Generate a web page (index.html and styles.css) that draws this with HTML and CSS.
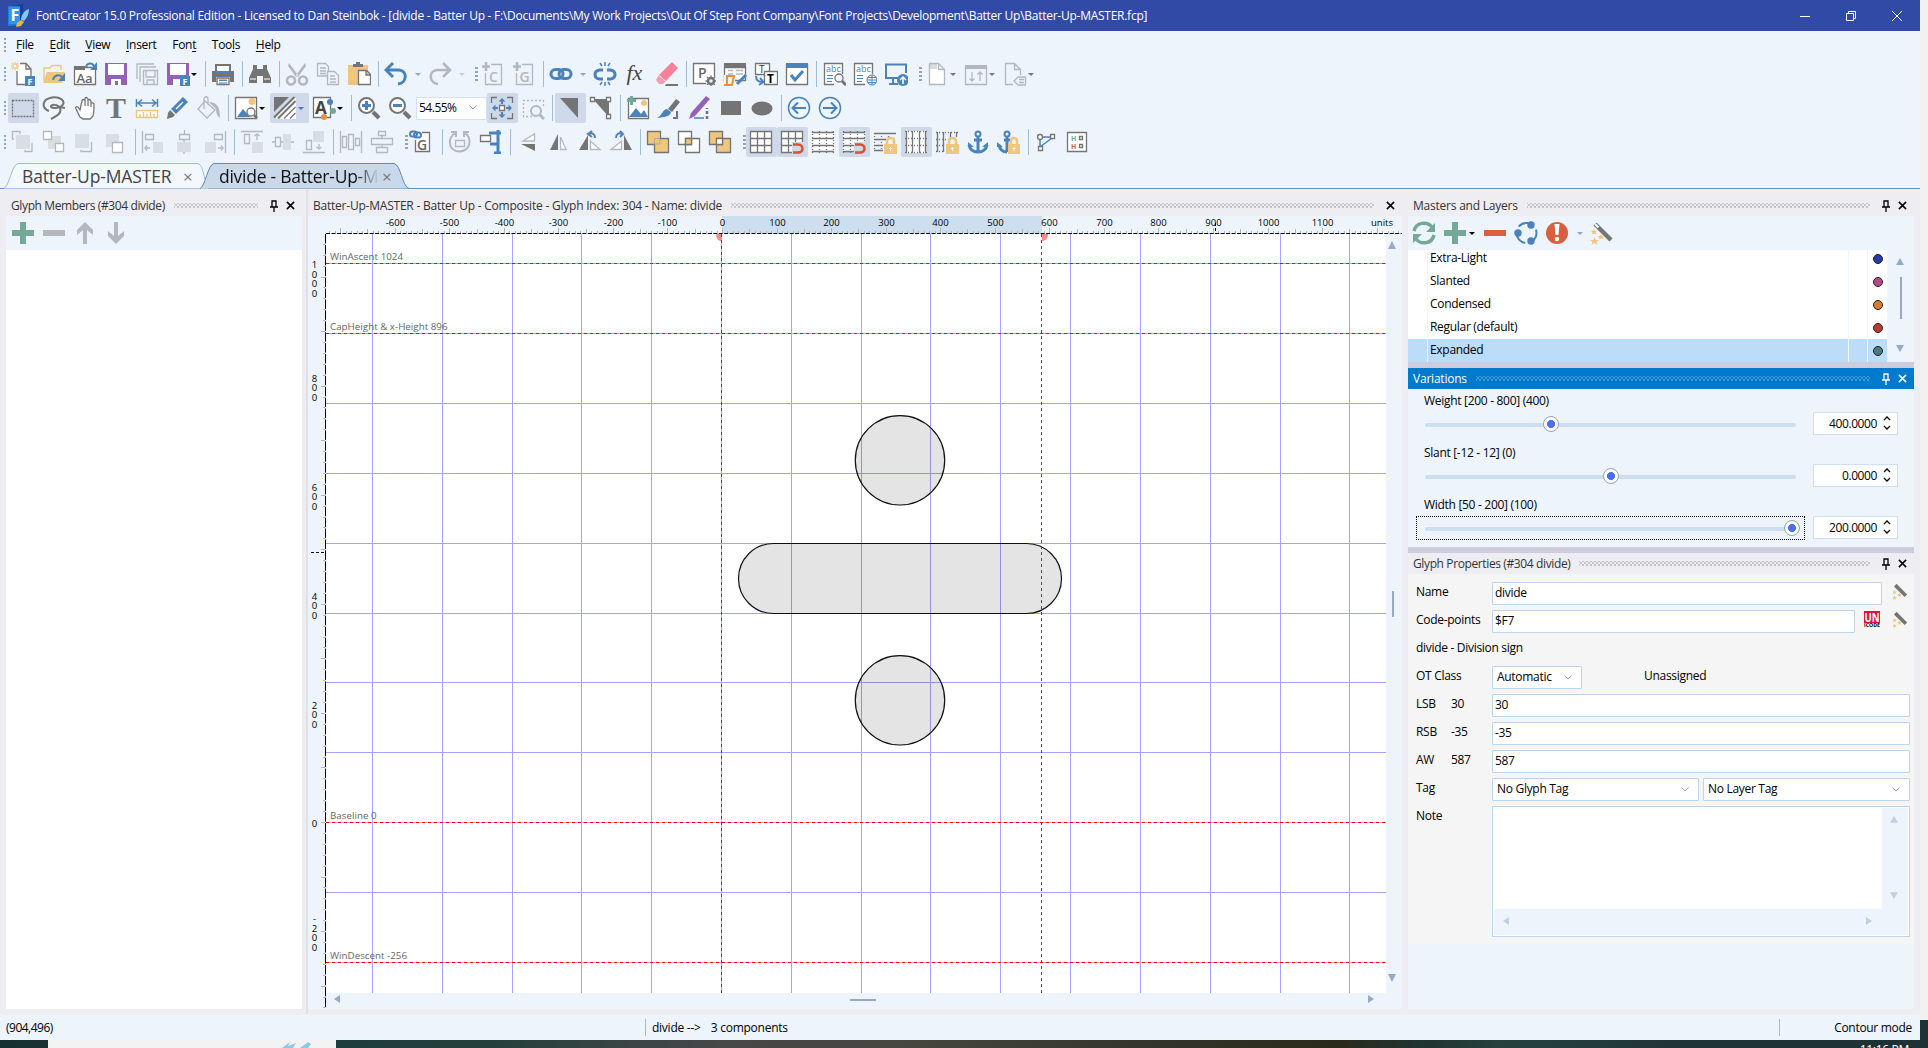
FILE: index.html
```html
<!DOCTYPE html>
<html lang="en">
<head>
    <meta charset="UTF-8">
    <title>FontCreator 15.0 Professional Edition</title>
    <link rel="stylesheet" href="styles.css">
</head>
<body>
<div class="window">
    <div class="titlebar">
        <svg class="app-icon" viewBox="0 0 24 24"><path d="M1 2l13-1v20L1 22z" fill="#1c7fe0"/><path d="M3 1.500l13-1v19l-3 2V2z" fill="#0d3f95"/><rect x="2" y="3" width="11" height="17" fill="#2f95ee"/><text x="3.500" y="17" font-size="16" font-weight="bold" fill="#fff">F</text><path d="M22 5c-5 2-8 6-8 11l3 1c3-3 5-7 5-12z" fill="#7ec8f5"/><path d="M10 19l4-3 3 2-3 4-5 1z" fill="#edb83d"/></svg>
        <span class="title">FontCreator 15.0 Professional Edition - Licensed to Dan Steinbok - [divide - Batter Up - F:\Documents\My Work Projects\Out Of Step Font Company\Font Projects\Development\Batter Up\Batter-Up-MASTER.fcp]</span>
        <svg class="win-btn" viewBox="0 0 12 12"><path d="M1 6.500h10"/></svg>
        <svg class="win-btn" viewBox="0 0 12 12"><path d="M1.500 3.500h7v7h-7zM3.500 3V1.500h7v7H9"/></svg>
        <svg class="win-btn last" viewBox="0 0 12 12"><path d="M1 1l10 10M11 1L1 11"/></svg>
    </div>

    <div class="menubar">
        <i class="grip first"></i>
        <span><u>F</u>ile</span><span><u>E</u>dit</span><span><u>V</u>iew</span><span><u>I</u>nsert</span><span>Fon<u>t</u></span><span>Too<u>l</u>s</span><span><u>H</u>elp</span>
    </div>

    <!-- file toolbar -->
    <div class="toolbar">
        <i class="grip first"></i>
        <b class="btn"><svg viewBox="0 0 24 24"><path class="s" d="M6 9v13.500h14V7l-5-5.500H9M15 1.500V7h5"/><path class="sy" d="M4 0v8M0 4h8M1 1l6 6M7 1L1 7"/><circle cx="4" cy="4" r="1.500" fill="#fff"/><rect class="fb" x="14" y="14" width="10" height="10"/><text class="tw" x="16.500" y="22.500" font-size="9">F</text></svg></b>
        <b class="btn"><svg viewBox="0 0 24 24"><path class="sy" d="M2 20V6h6l2-2.500h9V8"/><path class="fy" d="M1 21l4-11h18l-3 11z"/><path class="sb" d="M11 18c1-5 6-6 9-3"/><path class="fb" d="M23 11v8h-7z"/></svg></b>
        <b class="btn"><svg viewBox="0 0 24 24"><path class="s" d="M1.500 5.500h21v17h-21z"/><path class="fg" d="M1 4h11v4H1z"/><text class="tg" x="3.500" y="20.500" font-size="13">Aa</text><path class="sb" d="M13 5c1-4 6-5 8-1"/><path class="fb" d="M24 0v8h-7z"/></svg></b>
        <b class="btn"><svg viewBox="0 0 24 24"><path class="fp" d="M1 1h22v22H1z"/><path fill="#fff" d="M4 2h16v11H4zM7 17h10v6h-3v-4h-3v4H7z"/></svg></b>
        <b class="btn"><svg viewBox="0 0 24 24"><path class="sl" d="M2 17V2h17M5 20V5h16"/><path class="sl" d="M8.500 8.500h14v14h-14zM11 9v6h9V9M12 22v-4h7v4"/></svg></b>
        <b class="btn dd"><svg viewBox="0 0 24 24"><path class="fp" d="M1 1h22v22H1z"/><path fill="#fff" d="M4 2h16v11H4zM7 17h8v6H7z"/><rect class="fb" x="14" y="14" width="10" height="10"/><text class="tw" x="16.500" y="22.500" font-size="9">F</text></svg><i class="arr"></i></b>
        <i class="sep"></i>
        <b class="btn"><svg viewBox="0 0 24 24"><path class="fg" d="M1 9h3V2h16v7h3v11h-4v-5H5v5H1z"/><path fill="#fff" d="M6 4h12v5H6zM6 16h12v7H6z"/><path class="fb" d="M4 9h16v2H4zM8 17.500h8v1.500H8zM8 20.500h8v1H8z"/><path class="s none" d="M6 16h12v6.500H6z"/></svg></b>
        <i class="sep"></i>
        <b class="btn"><svg viewBox="0 0 24 24"><path class="fg" d="M5 3h4v4h6V3h4v4l4 9v5h-8v-7H9v7H1v-5l4-9z"/><path stroke="#fff" d="M2 17h6M16 17h6"/></svg></b>
        <i class="sep"></i>
        <b class="btn"><svg viewBox="0 0 24 24"><path class="fl" d="M4 1l9 12-2 2L3 4zM20 1l-9 12 2 2 8-11z"/><circle class="sl th" cx="6" cy="18.500" r="4"/><circle class="sl th" cx="18" cy="18.500" r="4"/></svg></b>
        <b class="btn"><svg viewBox="0 0 24 24"><path class="sl" d="M11 14H1.500V1.500h8l3 3V9M4 6h6M4 9h6M4 11.500h6"/><path class="sl" d="M11.500 9.500h7l4 4v9h-11zM14 14h5M14 17h6M14 20h6"/></svg></b>
        <b class="btn"><svg viewBox="0 0 24 24"><path class="fy" d="M1 3h20v20H1z"/><path class="fg" d="M6 5V2h3V0h4v2h3v3z"/><path class="s" d="M11.500 8.500h8l4 4v10h-12zM19 9v4h4"/></svg></b>
        <i class="sep"></i>
        <b class="btn dd wide"><svg viewBox="0 0 24 24"><path class="sb th" d="M3 8h12c9 1 8 13-1 14"/><path class="sb th" d="M9 1L2 8l7 7"/></svg><i class="arr pale"></i></b>
        <b class="btn dd wide"><svg viewBox="0 0 24 24"><path class="sl th" d="M21 8H9C0 9 1 21 10 22M15 1l7 7-7 7"/></svg><i class="arr paler"></i></b>
        <i class="grip"></i>
        <b class="btn"><svg viewBox="0 0 24 24"><path class="sl" d="M10 2.500h10.500v20h-16V11"/><path class="sl th" d="M5 0v9M1 4.500h8"/><text class="tl" x="8" y="19.500" font-size="14">C</text></svg></b>
        <b class="btn"><svg viewBox="0 0 24 24"><path class="sl" d="M10 2.500h10.500v20h-16V11"/><path class="sl th" d="M5 0v9M1 4.500h8"/><text class="tl" x="7.500" y="19.500" font-size="14">G</text></svg></b>
        <i class="sep"></i>
        <b class="btn dd wide"><svg viewBox="0 0 24 24"><rect class="sb th" x="2" y="7.500" width="12" height="9" rx="4.500"/><rect class="sb th" x="10" y="7.500" width="12" height="9" rx="4.500"/></svg><i class="arr pale"></i></b>
        <b class="btn"><svg viewBox="0 0 24 24"><path class="sb th" d="M10 8H6.500c-6 1-6 8 0 9H10M14 8h3.500c6 1 6 8 0 9H14"/><path class="sb mid" d="M12 0v4M7 1l2 3M17 1l-2 3M12 20v4M7 23l2-3M17 23l-2-3"/></svg></b>
        <b class="btn"><svg viewBox="0 0 24 24"><text x="2.500" y="18" font-size="22" font-style="italic" fill="#444" class="serif">fx</text></svg></b>
        <b class="btn"><svg viewBox="0 0 24 24"><path d="M17 0l6 6L11 19l-7-6z" fill="#f7819a"/><path d="M3.500 13.500l7 6L8 22H4l-3-4z" fill="#f59db0"/><path class="fg" d="M11 22h12v2H10z"/></svg></b>
        <i class="sep"></i>
        <b class="btn"><svg viewBox="0 0 24 24"><path class="s" d="M1.500 1.500h21v20h-21z"/><text class="tg" x="6" y="16" font-size="14">P</text><circle cx="19" cy="19" r="5.500" fill="#edf4fc"/><circle class="s none w25" cx="19" cy="19" r="3"/><path class="s none" d="M19 13.500v11M13.500 19h11M15 15l8 8M23 15l-8 8" stroke-dasharray="2 7"/></svg></b>
        <b class="btn"><svg viewBox="0 0 24 24"><path class="s" d="M1.500 5.500h21v13h-21z"/><path class="fg" d="M1 1h22v4H1z"/><path class="sl" d="M5 8.500h5M13 8.500h7M5 12h5M13 12h7"/><path d="M1 13h11v10H1z" fill="#edf4fc"/><path d="M3 14h8l-2 9H1M4 14v8" fill="none" stroke="#e8903c" stroke-width="2"/><path class="sb th" d="M14 22l9-9"/></svg></b>
        <b class="btn"><svg viewBox="0 0 24 24"><path class="s" d="M1.500 1.500h14v11h-14z"/><path class="s" d="M10.500 9.500h13v13h-13z"/><text x="5" y="11" font-size="10" fill="#333">T</text><text x="13" y="20.500" font-size="12" font-weight="bold" fill="#000">T</text><path class="sb" d="M2 14c0 4 2 6 6 6M6 16l3.500 4L5 23"/></svg></b>
        <b class="btn"><svg viewBox="0 0 24 24"><path class="s" d="M1.500 2.500h21v20h-21z"/><path class="fb" d="M1 1h22v5H1z"/><path class="sb th" d="M6 13l4 5 8-9"/></svg></b>
        <i class="sep"></i>
        <b class="btn"><svg viewBox="0 0 24 24"><path class="s" d="M20.500 12V1.500h-18v21H12"/><text x="4" y="10" font-size="9" fill="#4a82bc">abc</text><path class="sb thin" d="M5 13.500h6M5 16.500h6M5 19.500h5"/><circle class="s none" cx="17" cy="16" r="4"/><path class="s none w3" d="M20 19l4 4"/></svg></b>
        <b class="btn"><svg viewBox="0 0 24 24"><path class="s" d="M19.500 12V1.500h-18v21H12"/><text x="3" y="10" font-size="9" fill="#4a82bc">abc</text><path class="sb thin" d="M4 13.500h6M4 16.500h6M4 19.500h5"/><circle cx="19" cy="18" r="5" fill="#fff" stroke="#4a82bc"/><path class="sb thin" d="M14 18h10M19 13v10M15 15.500h8M15 20.500h8"/></svg></b>
        <b class="btn"><svg viewBox="0 0 24 24"><path class="sb" d="M14 16H2V2.500h20V11M5 22h9M9 16v5"/><circle class="fb" cx="19" cy="18" r="6"/><path d="M19 22v-7M16 18l3-3 3 3" fill="none" stroke="#fff" stroke-width="1.500"/></svg></b>
        <i class="grip"></i>
        <b class="btn dd"><svg viewBox="0 0 24 24"><path class="sl wf" d="M4.500 1.500h9l6 6v15h-15zM13.500 1.500v6h6"/><path class="fl" opacity=".5" d="M5 2h7v5H5z"/></svg><i class="arr grey"></i></b>
        <b class="btn dd"><svg viewBox="0 0 24 24"><path class="sl" d="M1.500 5.500h21v17h-21z"/><path class="fl" d="M1 3h22v4H1z"/><path class="sl" d="M8 10v9M5.500 16.500L8 19l2.500-2.500M16 19v-9M13.500 12.500L16 10l2.500 2.500"/></svg><i class="arr grey"></i></b>
        <b class="btn dd"><svg viewBox="0 0 24 24"><path class="sl" d="M10 22.500H2.500v-21h9l6 6V13M11.500 1.500v6h6M11 19l4-4h7.500v8H15zM16 17.500h5M16 20.500h5"/></svg><i class="arr grey"></i></b>
    </div>

    <!-- drawing toolbar -->
    <div class="toolbar">
        <i class="grip first"></i>
        <b class="btn on"><svg viewBox="0 0 24 24"><path class="s none" stroke-dasharray="2 1" d="M1.500 4.500h21v16h-21z"/></svg></b>
        <b class="btn"><svg viewBox="0 0 24 24"><path class="s none w2" d="M7 15C-1 12 0 3 10 1.500c8-1 13 3 11 7C19 12 11 13 9 11c-1-3 7-3 9 1 2 5-3 8-9 11M17 11l6 1"/></svg></b>
        <b class="btn"><svg viewBox="0 0 24 24"><path class="s" d="M7 14L5 11c-2-1-3 0-2 2l4 8 3 2h7l3-3c1-4 1-8 1-12-1-2-3-1-3 0V5c-1-2-3-2-3 0V3c-1-2-3-2-3 0v2c-1-2-3-2-3 0zM12 4v6M15 5v5M18 8v3"/></svg></b>
        <b class="btn"><svg viewBox="0 0 24 24"><text class="serif" x="12" y="22" font-size="30" font-weight="bold" text-anchor="middle" fill="#747474">T</text></svg></b>
        <b class="btn"><svg viewBox="0 0 24 24"><path class="sb mid" d="M1.500 3v8M22.500 3v8M3 7h18M7 3.500L3 7l4 3.500M17 3.500L21 7l-4 3.500"/><path class="sy wf" d="M1.500 14.500h21v7h-21zM5 18v3M8.500 16v5M12 18v3M15.500 16v5M19 18v3"/></svg></b>
        <b class="btn"><svg viewBox="0 0 24 24"><path class="fb" d="M17 1l5 5L10 18l-5-5z"/><path class="fg" d="M4 14l5 5-2 2-6 2 1-6z"/><path stroke="#fff" stroke-width="1.500" d="M10 13l7-7"/></svg></b>
        <b class="btn"><svg viewBox="0 0 24 24"><path class="sl" d="M8 5l10 9-8 8-9-9zM7 13V3c0-3 4-3 4 0v6"/><path class="fl" d="M12 6c8 0 11 5 11 16-3-2-4-5-4-9z"/></svg></b>
        <i class="sep"></i>
        <b class="btn dd"><svg viewBox="0 0 24 24"><path class="s" d="M1.500 1.500h21v21h-21z"/><circle class="fy" cx="18" cy="5.500" r="3.500"/><path class="fb" d="M3 21l6-8 7 8z"/><circle class="s" cx="17" cy="16" r="4"/><path class="s w25" d="M20 19l3 3"/></svg><i class="arr"></i></b>
        <b class="btn dd on"><svg viewBox="0 0 24 24"><path fill="#fff" d="M20 2h3v21H3v-3z"/><path class="fg" d="M1 1h15L1 16z"/><path class="s none w2" d="M1 21.500L21.500 1M5 22.500L22.500 5"/><path class="s none" d="M11 22.500L22.500 11M17 22.500l5.500-5.500"/></svg><i class="arr blue"></i></b>
        <b class="btn dd"><svg viewBox="0 0 24 24"><path class="s" d="M1.500 1.500h17v20h-17z"/><text x="3" y="17.500" font-size="17" font-weight="bold" fill="#444">A</text><circle class="fb" cx="18" cy="6" r="3"/><circle class="ff" cx="21" cy="15" r="3"/><circle cx="12" cy="21" r="3" fill="#e8903c"/></svg><i class="arr"></i></b>
        <i class="sep"></i>
        <b class="btn"><svg viewBox="0 0 24 24"><path class="s w4" d="M16 16l6 6"/><circle class="s w2" cx="9.500" cy="9.500" r="7.500"/><path class="sb th" d="M5 9.500h9M9.500 5v9"/></svg></b>
        <b class="btn"><svg viewBox="0 0 24 24"><path class="s w4" d="M16 16l6 6"/><circle class="s w2" cx="9.500" cy="9.500" r="7.500"/><path class="sb th" d="M5 9.500h9"/></svg></b>
        <div class="combo">54.55%<svg viewBox="0 0 8 5"><path d="M.5.5L4 4 7.500.5"/></svg></div>
        <b class="btn on"><svg viewBox="0 0 24 24"><path class="s none" d="M7 1.500H1.500V7M17 1.500h5.500V7M7 22.500H1.500V17M17 22.500h5.500V17"/><path class="s" d="M9.500 9.500h5v5h-5z"/><path class="fb" d="M12 2l3.500 3.500H13V8h-2V5.500H8.500zM12 22l3.500-3.500H13V16h-2v2.500H8.500zM2 12l3.500-3.500V11H8v2H5.500v2.500zM22 12l-3.500-3.500V11H16v2h2.500v2.500z"/></svg></b>
        <b class="btn"><svg viewBox="0 0 24 24"><path class="sl" stroke-dasharray="2 2" d="M11 20.500H2.500v-16h20V12"/><circle class="sl w2" cx="15" cy="15" r="5"/><path class="sl w3" d="M19 19l4 4"/></svg></b>
        <i class="sep"></i>
        <b class="btn on"><svg viewBox="0 0 24 24"><path class="fg" d="M2 2h18v20z"/></svg></b>
        <b class="btn"><svg viewBox="0 0 24 24"><path class="fg" d="M4 3h16v18z"/><path class="s" d="M1.500 1.500h4v4h-4zM17.500 1.500h4v4h-4zM17.500 18.500h4v4h-4z"/></svg></b>
        <i class="sep"></i>
        <b class="btn"><svg viewBox="0 0 24 24"><path class="s" d="M2.500 2.500h20v20h-20z"/><circle class="fy" cx="18" cy="7" r="3"/><path class="fb" d="M3 21l7-9 5 6 3-4 4 7z"/><path class="ff" d="M4 0h3v3h3v3H7v3H4V6H1V3h3z"/></svg></b>
        <b class="btn"><svg viewBox="0 0 24 24"><path class="fg" d="M19 3l4 3-8 10-4-3z"/><path class="fb" d="M10 13l4 3c-1 5-7 5-14 6 5-2 5-8 10-9z"/><path class="s none w2" d="M16 22h4v-7"/></svg></b>
        <b class="btn"><svg viewBox="0 0 24 24"><path class="fp" d="M18 0l4 3L7 20l-6 3 2-6z"/><path class="sb mid" d="M6 22h10"/><path class="s w25" d="M19 23V12" stroke-dasharray="3 2"/></svg></b>
        <b class="btn"><svg viewBox="0 0 24 24"><path class="fg" d="M2 5h20v14H2z"/></svg></b>
        <b class="btn"><svg viewBox="0 0 24 24"><ellipse class="fg" cx="12" cy="12.500" rx="10.500" ry="7"/></svg></b>
        <i class="sep"></i>
        <b class="btn"><svg viewBox="0 0 24 24"><circle class="sb mid" cx="12" cy="12" r="10.500"/><path class="sb" d="M19 12H6M11 6.500L5.500 12l5.500 5.500"/></svg></b>
        <b class="btn"><svg viewBox="0 0 24 24"><circle class="sb mid" cx="12" cy="12" r="10.500"/><path class="sb" d="M5 12h13M13 6.500l5.500 5.500-5.500 5.500"/></svg></b>
    </div>

    <!-- align / grid toolbar -->
    <div class="toolbar">
        <i class="grip first"></i>
        <b class="btn"><svg viewBox="0 0 24 24"><path class="fl2" d="M5 5h14v14H5z"/><path class="sl" d="M3 9H1.500V1.500H9V4M21 13v8.500h-7V20"/></svg></b>
        <b class="btn"><svg viewBox="0 0 24 24"><path class="fl2" d="M6 6h13v13H6z"/><path class="sl wf" d="M1.500 1.500h8v8h-8zM13.500 13.500h8v8h-8z"/></svg></b>
        <b class="btn"><svg viewBox="0 0 24 24"><path class="fl2" d="M2 4h14v14H2z"/><path class="sl" d="M18.500 12v9.500H8V20"/></svg></b>
        <b class="btn"><svg viewBox="0 0 24 24"><path class="fl2" d="M2 4h13v13H2z"/><path class="sl wf" d="M8.500 12.500h10v10h-10z"/></svg></b>
        <i class="sep"></i>
        <b class="btn"><svg viewBox="0 0 24 24"><path class="sl" d="M1.500 1v22M4.500 4.500h8v5h-8zM9 18H4M6 15.500L4 18l2 2.500"/><path class="fl2" d="M12 12h10v11H12z"/></svg></b>
        <b class="btn"><svg viewBox="0 0 24 24"><path class="sl" d="M12.500 0v5M7.500 4.500h10v5h-10zM12 10v14"/><path class="fl2" d="M5 12h14v10H5z"/></svg></b>
        <b class="btn"><svg viewBox="0 0 24 24"><path class="sl" d="M22.500 1v22M11.500 4.500h8v5h-8zM15 18h5M18 15.500l2 2.500-2 2.500"/><path class="fl2" d="M2 12h11v11H2z"/></svg></b>
        <i class="sep"></i>
        <b class="btn"><svg viewBox="0 0 24 24"><path class="sl" d="M1 1.500h22M4.500 4.500h5v9h-5zM17 10V4M14.500 6L17 4l2.500 2"/><path class="fl2" d="M12 12h11v11H12z"/></svg></b>
        <b class="btn"><svg viewBox="0 0 24 24"><path class="sl" d="M1 12h3M4.500 7.500h5v9h-5zM10 12h13"/><path class="fl2" d="M12 4h8v16h-8z"/></svg></b>
        <b class="btn"><svg viewBox="0 0 24 24"><path class="sl" d="M1 22.500h22M4.500 10.500h5v9h-5zM17 14v5M14.500 17l2.500 2 2.500-2"/><path class="fl2" d="M11 1h11v11H11z"/></svg></b>
        <i class="sep"></i>
        <b class="btn"><svg viewBox="0 0 24 24"><path class="sl" d="M1.500 1v22M22.500 1v22M3.500 6.500h4v11h-4zM16.500 8.500h4v7h-4zM9.500 4.500h5v15h-5z"/></svg></b>
        <b class="btn"><svg viewBox="0 0 24 24"><path class="sl" d="M8.500 1.500h7v4h-7zM1.500 8.500h21v6h-21zM6.500 17.500h11v5h-11zM12 6v2M12 15v2"/></svg></b>
        <i class="grip"></i>
        <b class="btn link-g"><svg viewBox="0 0 24 24"><path class="s" d="M13 2.500h7.500v19h-14V10"/><text class="tg" x="8" y="19.500" font-size="14">G</text><rect class="sb" x="1" y="1.500" width="7" height="5" rx="2.500"/><rect class="sb" x="5" y="2.500" width="7" height="5" rx="2.500"/></svg></b>
        <i class="sep"></i>
        <b class="btn"><svg viewBox="0 0 24 24"><path class="sl w2" d="M7 3c-7 5-7 15 1 18 4 1 7 0 9-1 6-4 6-13 0-17M3 2h5v5M21 2h-5v5"/><path class="sl" d="M7.500 10.500h9v6h-9z"/></svg></b>
        <b class="btn"><svg viewBox="0 0 24 24"><path class="sb th" d="M10 3h12M19 0v24M15 23h7M11 14h8"/><path class="s" d="M1.500 5.500h10v6h-10z"/></svg></b>
        <i class="sep"></i>
        <b class="btn"><svg viewBox="0 0 24 24"><path class="sl wf" d="M18.500 4v7H7z"/><path class="fg" d="M5 14h14v7z"/></svg></b>
        <b class="btn"><svg viewBox="0 0 24 24"><path class="fg" d="M11 4v16H3z"/><path class="sl wf" d="M13.500 7v12.500H19z"/></svg></b>
        <b class="btn"><svg viewBox="0 0 24 24"><path class="fg" d="M10 5v15H1z"/><path class="sl wf" d="M12.500 11v8.500H22z"/><path class="sb" d="M11 4c3-2 6 0 6 4M14 1l-4 3 4 3"/></svg></b>
        <b class="btn"><svg viewBox="0 0 24 24"><path class="fg" d="M15 5v15h8z"/><path class="sl wf" d="M12.500 11v8.500H2z"/><path class="sb" d="M13 4C10 2 7 4 7 8M11 1l3 3-3 3"/></svg></b>
        <i class="sep"></i>
        <b class="btn"><svg viewBox="0 0 24 24"><path fill="#eec77c" stroke="#747474" stroke-width="1.300" d="M1.500 1.500h13v7h8v14h-14v-8h-7z"/><path fill="none" stroke="#aaa" d="M8.500 14V8.500H14V14z"/></svg></b>
        <b class="btn"><svg viewBox="0 0 24 24"><path class="s" d="M1.500 1.500h13v13h-13zM8.500 8.500h14v14h-14z"/><path fill="#eec77c" stroke="#747474" stroke-width="1.300" d="M8.500 8.500h6v6h-6z"/></svg></b>
        <b class="btn"><svg viewBox="0 0 24 24"><path fill="#eec77c" stroke="#747474" stroke-width="1.300" d="M1.500 1.500h13v13h-13zM8.500 8.500h14v14h-14z"/><path class="s" d="M8.500 8.500h6v6h-6z"/></svg></b>
        <i class="grip"></i>
        <b class="btn on"><svg viewBox="0 0 24 24"><path class="s" d="M1.500 1.500h21v21h-21zM1 8.500h22M1 15.500h22M8.500 1v22M15.500 1v22"/></svg></b>
        <b class="btn on"><svg viewBox="0 0 24 24"><path class="s" d="M1.500 1.500h21v21h-21zM1 8.500h22M1 15.500h22M8.500 1v22M15.500 1v22"/><path fill="#cfd9ea" d="M12 12h12v12H12z"/><path class="mag" d="M13 14.500h5c6 0 6 8 0 8h-5"/></svg></b>
        <b class="btn"><svg viewBox="0 0 24 24"><path fill="#fff" d="M1 2h22v20H1z"/><path class="s none" d="M1 2.500h22M1 8.500h22M1 15.500h22M1 21.500h22"/><path class="s none" stroke-dasharray="1 2" d="M1.500 1v22M8.500 1v22M15.500 1v22M22.500 1v22"/></svg></b>
        <b class="btn on"><svg viewBox="0 0 24 24"><path fill="#fff" d="M1 2h22v20H1z"/><path class="s none" d="M1 2.500h22M1 8.500h22M1 15.500h22M1 21.500h22"/><path class="s none" stroke-dasharray="1 2" d="M1.500 1v22M8.500 1v22M15.500 1v22M22.500 1v22"/><path fill="#cfd9ea" d="M12 12h12v12H12z"/><path class="mag" d="M13 14.500h5c6 0 6 8 0 8h-5"/></svg></b>
        <b class="btn"><svg viewBox="0 0 24 24"><path class="s none" d="M1 3.500h22M1 9.500h12M1 15.500h9M1 20.500h9"/><path class="s none" stroke-dasharray="1 2" d="M1.500 3v18M8.500 3v18M15.500 3v5"/><path class="fy" d="M11 14h13v10H11z"/><path d="M14 14v-3c0-4 7-4 7 0v3" fill="none" stroke="#eec77c" stroke-width="2.500"/><path stroke="#fff" d="M17.500 21v-4M16 18.500h3"/></svg></b>
        <b class="btn on"><svg viewBox="0 0 24 24"><path fill="#fff" d="M2 1h20v22H2z"/><path class="s none" d="M2.500 1v22M8.500 1v22M15.500 1v22M21.500 1v22"/><path class="s none" stroke-dasharray="1 2" d="M1 1.500h22M1 8.500h22M1 15.500h22M1 22.500h22"/></svg></b>
        <b class="btn"><svg viewBox="0 0 24 24"><path class="s none" d="M2.500 2v20M8.500 2v20M15.500 2v7M21.500 2v5"/><path class="s none" stroke-dasharray="1 2" d="M1 2.500h22M1 9.500h14M1 15.500h9M1 21.500h9"/><path class="fy" d="M11 14h13v10H11z"/><path d="M14 14v-3c0-4 7-4 7 0v3" fill="none" stroke="#eec77c" stroke-width="2.500"/><path stroke="#fff" d="M17.500 21v-4M16 18.500h3"/></svg></b>
        <b class="btn"><svg viewBox="0 0 24 24"><circle class="sb" cx="12" cy="4" r="2.500"/><path class="sb th" d="M12 7v15M8 10h8M3 15c1 5 5 7 9 7s8-2 9-7"/><path class="fb" d="M2 12l6 5H2zM22 12l-6 5h6z"/></svg></b>
        <b class="btn"><svg viewBox="0 0 24 24"><circle class="sb" cx="10" cy="4" r="2.500"/><path class="sb th" d="M10 7v15M7 10h6M2 15c1 5 4 7 8 7"/><path class="fb" d="M0 12l6 5H0z"/><path class="fy" d="M11 14h12v10H11z"/><path d="M14 14v-3c0-4 6-4 6 0v3" fill="none" stroke="#eec77c" stroke-width="2.500"/><path stroke="#fff" d="M17 21v-4M15.500 18.500h3"/></svg></b>
        <i class="sep"></i>
        <b class="btn"><svg viewBox="0 0 24 24"><path class="sb mid" d="M5 7h14M6 17L18 8M6 8v10"/><circle class="s" cx="6" cy="7" r="2.500"/><path class="s" d="M16.500 4.500h4v4h-4zM4.500 16.500h4v4h-4z"/></svg></b>
        <b class="btn"><svg viewBox="0 0 24 24"><path class="s" d="M2.500 2.500h19v19h-19z"/><path class="s" d="M14.500 6.500h3v3h-3zM14.500 14.500h3v3h-3z"/><text x="6" y="10.500" font-size="7" font-weight="bold" fill="#75a997">H</text><text x="6" y="18.500" font-size="7" font-weight="bold" fill="#d9603f">H</text></svg></b>
    </div>

    <div class="tabs">
        <div class="tab"><svg class="shape" viewBox="0 0 206 26"><path d="M0 25.500C5 24 8 1 14 .5h179c6 0 6 12 9 18l2 7"/></svg><span>Batter-Up-MASTER</span><i>×</i></div>
        <div class="tab active"><svg class="shape" viewBox="0 0 212 26"><path d="M0 25.500C5 24 8 1 14 .5h180c7 1 8 23 15 25"/></svg><span>divide - Batter-Up-M</span><i>×</i></div>
    </div>

    <div class="main">
        <div class="panel members">
            <div class="head tight"><span>Glyph Members (#304 divide)</span><i class="dots"></i><svg class="pin" viewBox="0 0 8 12"><path d="M2 6.500V1h4v5.500M0 7h8M4 7v5"/></svg><svg class="x" viewBox="0 0 10 10"><path d="M1 1l8 8M9 1L1 9"/></svg></div>
            <div class="tools">
                <svg viewBox="0 0 24 24"><path class="ff" d="M9 1h6v8h8v6h-8v8H9v-8H1V9h8z"/></svg>
                <svg viewBox="0 0 24 24"><path class="fl" d="M1 9h22v6H1z"/></svg>
                <svg viewBox="0 0 24 24"><path class="fl" d="M12 1l8 8v5l-6-5v14h-4V9l-6 5V9z"/></svg>
                <svg viewBox="0 0 24 24"><path class="fl" d="M12 23l8-8v-5l-6 5V1h-4v14l-6-5v5z"/></svg>
            </div>
            <div class="blank"></div>
        </div>

        <div class="panel doc">
            <div class="head"><span>Batter-Up-MASTER - Batter Up - Composite - Glyph Index: 304 - Name: divide</span><i class="dots"></i><svg class="x" viewBox="0 0 10 10"><path d="M1 1l8 8M9 1L1 9"/></svg></div>
            <!-- viewBox is in window pixels; script.js fills in grid, rulers and guides -->
            <svg id="canvas" class="canvas" viewBox="308 216 1094 793">
                <rect x="326" y="234" width="1060" height="759" fill="#fff"/>
                <rect x="722" y="216" width="320" height="17" fill="#cddeef"/>
                <g id="grid"></g>
                <g class="outline">
                    <ellipse cx="900" cy="460.300" rx="44.700" ry="44.700"/>
                    <rect x="738.500" y="543.500" width="323" height="70" rx="35"/>
                    <ellipse cx="900" cy="700.300" rx="44.700" ry="44.700"/>
                </g>
                <g id="guides"></g>
                <path class="bearing" d="M721 234h-5c0 4 2 7 5 7zM1042 234h6c0 4-2 7-6 7z"/>
                <g id="ruler"></g>
                <path class="edge" d="M326 233.500h1076"/>
                <path class="edge down" d="M325.500 234v774"/>
                <path d="M1215.500 223v11M311 552.500h14" stroke="#000" stroke-dasharray="3 2"/>
                <g class="sb-arrows"><path d="M1388 249h8l-4-8zM1388 974h8l-4 8zM340 995v8l-6-4zM1368 995v8l6-4z"/><path d="M1392 591h2v26h-2zM850 999h26v2h-26z"/></g>
            </svg>
        </div>

        <div class="side">
            <div class="head"><span>Masters and Layers</span><i class="dots"></i><svg class="pin" viewBox="0 0 8 12"><path d="M2 6.500V1h4v5.500M0 7h8M4 7v5"/></svg><svg class="x" viewBox="0 0 10 10"><path d="M1 1l8 8M9 1L1 9"/></svg></div>
            <div class="tools masters">
                <svg viewBox="0 0 24 24"><path d="M2 10c2-9 13-10 18-4M22 14c-2 9-13 10-18 4" fill="none" stroke="#75a997" stroke-width="3.500"/><path class="ff" d="M23 2v9h-9zM1 22v-9h9z"/></svg>
                <svg viewBox="0 0 24 24"><path class="ff" d="M9 1h6v8h8v6h-8v8H9v-8H1V9h8z"/></svg><i class="arr"></i>
                <svg class="m8" viewBox="0 0 24 24"><path class="fr" d="M1 9h22v6H1z"/></svg>
                <svg class="m7" viewBox="0 0 24 24"><circle class="sb" cx="12.500" cy="12" r="10" stroke-dasharray="14 7" stroke-dashoffset="4"/><circle class="fb" cx="4" cy="12" r="3.700"/><circle class="fb" cx="17" cy="4" r="3.700"/><circle class="fb" cx="17" cy="20" r="3.700"/></svg>
                <svg class="m7" viewBox="0 0 24 24"><circle class="fr" cx="12" cy="12" r="11"/><path fill="#fff" d="M9.500 3h5l-1 11h-3z"/><circle cx="12" cy="18" r="2.200" fill="#fff"/></svg><i class="arr pale gap"></i>
                <svg class="m9" viewBox="0 0 24 24"><path d="M5 3l16 16" stroke="#747474" stroke-width="4.500"/><path d="M5 3l3.500 3.500" stroke="#fff" stroke-width="2"/><path class="fy" d="M4 8l1 2h2l-1.500 1.500 1 2L4 12.500l-2.500 1 1-2L1 10h2zM11 13l1 2h2l-1.500 1.500 1 2-2.500-1-2.500 1 1-2L7.500 15h2zM4.500 16l1.200 3H9l-2.500 2 1 3-3-2-3 2 1-3L0 19h3.300z"/></svg>
            </div>
            <div class="layers">
                <ul>
                    <li><span>Extra-Light</span><em></em><b><i class="dot" style="background:#2b3aa8"></i></b></li>
                    <li><span>Slanted</span><em></em><b><i class="dot" style="background:#b34a8c"></i></b></li>
                    <li><span>Condensed</span><em></em><b><i class="dot" style="background:#dd7a2c"></i></b></li>
                    <li><span>Regular (default)</span><em></em><b><i class="dot" style="background:#b83c30"></i></b></li>
                    <li class="sel"><span>Expanded</span><em></em><b><i class="dot" style="background:#477b80"></i></b></li>
                </ul>
                <svg class="vscroll" viewBox="0 0 27 112"><path d="M9 15h8l-4-7zM9 95h8l-4 7zM13 27h2v42h-2z"/></svg>
            </div>
            <div class="band"></div>

            <div class="head blue"><span>Variations</span><i class="dots"></i><svg class="pin" viewBox="0 0 8 12"><path d="M2 6.500V1h4v5.500M0 7h8M4 7v5"/></svg><svg class="x" viewBox="0 0 10 10"><path d="M1 1l8 8M9 1L1 9"/></svg></div>
            <div class="variations">
                <label>Weight [200 - 800] (400)</label>
                <div class="axis"><div class="slider"><div class="track"><i style="left:34%"></i></div></div><div class="spin">400.0000<svg viewBox="0 0 8 14"><path d="M1 4l3-3 3 3M1 10l3 3 3-3"/></svg></div></div>
                <label>Slant [-12 - 12] (0)</label>
                <div class="axis"><div class="slider"><div class="track"><i style="left:50.200%"></i></div></div><div class="spin">0.0000<svg viewBox="0 0 8 14"><path d="M1 4l3-3 3 3M1 10l3 3 3-3"/></svg></div></div>
                <label>Width [50 - 200] (100)</label>
                <div class="axis"><div class="slider focus"><div class="track"><i style="left:99%"></i></div></div><div class="spin">200.0000<svg viewBox="0 0 8 14"><path d="M1 4l3-3 3 3M1 10l3 3 3-3"/></svg></div></div>
            </div>
            <div class="band"></div>

            <div class="head tight"><span>Glyph Properties (#304 divide)</span><i class="dots"></i><svg class="pin" viewBox="0 0 8 12"><path d="M2 6.500V1h4v5.500M0 7h8M4 7v5"/></svg><svg class="x" viewBox="0 0 10 10"><path d="M1 1l8 8M9 1L1 9"/></svg></div>
            <div class="props">
                <div class="row"><label>Name</label><div class="field">divide</div><svg class="wand" viewBox="0 0 24 24"><path d="M6 3l15 15" stroke="#747474" stroke-width="5"/><path class="fy" d="M5 10l1 2h2l-1.500 1.500 1 2L5 14.500l-2.500 1 1-2L2 12h2zM12 14l1 2h2l-1.500 1.500 1 2-2.500-1-2.500 1 1-2L8.500 16h2zM5 18l1 2h2l-1.500 1.500 1 2L5 22.500l-2.500 1 1-2L2 20h2z"/></svg></div>
                <div class="row"><label>Code-points</label><div class="field">$F7</div><svg class="uni" viewBox="0 0 16 16"><path fill="#d8153a" d="M0 0h16v12H0z"/><text x=".5" y="11" font-size="13" font-weight="bold" fill="#fff" textLength="15" lengthAdjust="spacingAndGlyphs">UN</text><text x="0" y="16" font-size="5" font-weight="bold" textLength="16" lengthAdjust="spacingAndGlyphs">ICODE</text></svg><svg class="wand" viewBox="0 0 24 24"><path d="M6 3l15 15" stroke="#747474" stroke-width="5"/><path class="fy" d="M5 10l1 2h2l-1.500 1.500 1 2L5 14.500l-2.500 1 1-2L2 12h2zM12 14l1 2h2l-1.500 1.500 1 2-2.500-1-2.500 1 1-2L8.500 16h2zM5 18l1 2h2l-1.500 1.500 1 2L5 22.500l-2.500 1 1-2L2 20h2z"/></svg></div>
                <div class="row"><label class="long">divide - Division sign</label></div>
                <div class="row"><label>OT Class</label><div class="field select auto">Automatic<svg viewBox="0 0 8 5"><path d="M.5.5L4 4 7.500.5"/></svg></div><span class="unassigned">Unassigned</span></div>
                <div class="row"><label>LSB</label><label class="num">30</label><div class="field">30</div></div>
                <div class="row"><label>RSB</label><label class="num">-35</label><div class="field">-35</div></div>
                <div class="row"><label>AW</label><label class="num">587</label><div class="field">587</div></div>
                <div class="row"><label>Tag</label><div class="field select">No Glyph Tag<svg viewBox="0 0 8 5"><path d="M.5.5L4 4 7.500.5"/></svg></div><div class="field select second">No Layer Tag<svg viewBox="0 0 8 5"><path d="M.5.5L4 4 7.500.5"/></svg></div></div>
                <div class="row note"><label>Note</label><div class="memo"><div></div><svg class="mv" viewBox="0 0 26 102"><path d="M8 15h8l-4-7zM8 85h8l-4 7z"/></svg><svg class="mh" viewBox="0 0 388 26"><path d="M15 8v8l-6-4zM372 8v8l6-4z"/></svg><div class="corner"></div></div></div>
            </div>
        </div>
    </div>

    <div class="status"><span class="pos">(904,496)</span><span class="info"><span>divide --&gt;</span><span>3 components</span></span><span class="mode">Contour mode</span></div>
</div>
<div class="gutter"></div>
<div class="taskbar"><div class="search"><svg viewBox="0 0 32 8"><path d="M2 8l8-6-2 4 8-3-3 5zM20 8l8-6 3 2-3 4z" fill="#8cc8e8"/></svg></div><span>11:16 PM</span></div>
<script src="script.js"></script>
</body>
</html>
```
FILE: styles.css
```css
* { box-sizing: border-box; }
body {
    margin: 0;
    width: 1928px;
    height: 1048px;
    overflow: hidden;
    display: grid;
    grid-template-columns: 1920px 8px;
    grid-template-rows: 1040px 8px;
    background: #1d3434;
    font-family: "Open Sans", "Noto Sans", sans-serif;
    font-size: 12px;
    letter-spacing: -0.3px;
    color: #000;
}
i { font-style: normal; }
svg { flex: none; display: block; }
svg text { letter-spacing: 0; }

.window { display: flex; flex-direction: column; background: #edf4fc; }
.gutter { background: #f1f1f2; height: 1020px; }

/* title and menu */
.titlebar { height: 31px; background: #314aa5; color: #fff; display: flex; align-items: center; padding-left: 7px; }
.app-icon { width: 24px; height: 24px; }
.title { flex: 1; padding-left: 5px; white-space: nowrap; letter-spacing: -0.26px; }
.win-btn { width: 12px; height: 12px; margin-right: 34px; fill: none; stroke: #fff; stroke-width: 1; }
.win-btn.last { margin-right: 17px; }
.menubar { height: 26px; display: flex; align-items: center; padding-top: 1px; }
.menubar span { margin-left: 8px; margin-right: 7.7px; }
.menubar u { text-underline-offset: 2px; }

/* toolbars */
.toolbar { height: 34px; display: flex; align-items: center; }
.grip { width: 3px; height: 14px; margin-left: 7px; background: repeating-linear-gradient(#8ea3c0 0 2px, transparent 2px 4px); flex: none; }
.grip.first { width: 2px; margin-left: 4px; margin-right: 2px; }
.btn { width: 31px; height: 30px; display: flex; align-items: center; padding-left: 3px; border-radius: 2px; flex: none; font-weight: normal; }
.btn svg { width: 24px; height: 24px; }
.btn.dd { width: 39px; }
.btn.dd.wide { width: 43.5px; }
.btn.link-g svg { margin-left: -2px; }
.btn.on { background: #cfd9ea; }
.sep { width: 1px; height: 26px; margin: 0 2px 0 3px; background: #a3bcd6; flex: none; }
.arr { border: 3px solid transparent; border-top-color: #000; border-bottom: 0; margin-left: 1px; }
.wide .arr { margin-left: 7px; }
.arr.pale { border-top-color: #8fa6c4; }
.arr.paler { border-top-color: #c3cfe0; }
.arr.grey { border-top-color: #777; }
.arr.blue { border-top-color: #4d6fe8; }
.combo { width: 71px; height: 23px; background: #fff; border: 1px solid #d3e2f3; display: flex; align-items: center; justify-content: space-between; padding: 0 9px 2px 2px; letter-spacing: -0.5px; }
.combo svg, .select svg { width: 8px; height: 5px; fill: none; stroke: #8fa6c4; }

/* icon paints */
.s { fill: #fff; stroke: #747474; stroke-width: 1.3; }
.sl { fill: none; stroke: #b4b8bc; stroke-width: 1.3; }
.sb { fill: none; stroke: #4a82bc; stroke-width: 2; }
.sy { fill: none; stroke: #eec77c; stroke-width: 1.4; }
.none { fill: none; }
.wf { fill: #fff; }
.thin { stroke-width: 1; }
.mid { stroke-width: 1.5; }
.w2 { stroke-width: 2; }
.w25 { stroke-width: 2.5; }
.w3 { stroke-width: 3; }
.w4 { stroke-width: 4; }
.th { stroke-width: 3; }
.sl.th { stroke-width: 2.6; }
.fg { fill: #747474; }
.fl { fill: #b4b8bc; }
.fl2 { fill: #d9dee3; }
.fb { fill: #4a82bc; }
.fy { fill: #eec77c; }
.fp { fill: #9560b8; }
.ff { fill: #75a997; }
.fr { fill: #d9603f; }
.mag { fill: none; stroke: #d9502f; stroke-width: 2.5; }
.tw { fill: #fff; font-weight: bold; }
.tg { fill: #666; font-weight: 600; }
.tl { fill: #b4b8bc; font-weight: 600; }
.serif { font-family: "Liberation Serif", serif; }

/* document tabs */
.tabs { height: 30px; padding: 4px 0 0 4px; display: flex; border-bottom: 1px solid #6a90ba; }
.tab { position: relative; width: 196px; height: 26px; display: flex; align-items: center; font-size: 17.5px; letter-spacing: -0.15px; color: #444; padding-left: 18px; }
.tab span { position: relative; width: 159px; white-space: nowrap; }
.tab i { position: relative; font-size: 17px; color: #777; padding-left: 2px; }
.tab .shape { position: absolute; left: 0; top: 0; width: 206px; height: 26px; }
.tab .shape path { fill: #f3f8fd; stroke: #a0bcd8; }
.tab.active { width: 212px; color: #111; padding-left: 19px; letter-spacing: -0.25px; }
.tab.active .shape { width: 212px; }
.tab.active .shape path { fill: #c9d9ea; stroke: #6487ac; }
.tab.active span { width: 161px; -webkit-mask-image: linear-gradient(90deg, #000 136px, transparent 160px); mask-image: linear-gradient(90deg, #000 136px, transparent 160px); }

/* docked panels */
.main { height: 826px; background: #eeeef2; display: flex; padding: 0 6px; }
.head { height: 27px; display: flex; align-items: center; padding: 6px 7px 0 5px; color: #333; letter-spacing: -0.22px; }
.head.tight { letter-spacing: -0.38px; }
.head .dots { flex: 1; height: 5px; margin: 0 12px 0 9px; background: radial-gradient(circle, #999 .6px, transparent .8px) 0 0 / 4px 4px, radial-gradient(circle, #999 .6px, transparent .8px) 2px 2px / 4px 4px; }
.head .pin { width: 8px; height: 12px; fill: none; stroke: #000; stroke-width: 1.3; margin-right: 8px; }
.head .x { width: 9px; height: 9px; fill: none; stroke: #000; stroke-width: 1.7; }
.members { width: 296px; display: flex; flex-direction: column; }
.tools { height: 34px; background: #edf4fc; display: flex; align-items: center; gap: 7px; padding-left: 5px; }
.tools svg { width: 24px; height: 24px; }
.members .blank { background: #fff; height: 759px; }
.doc { width: 1094px; margin-left: 6px; box-shadow: -3px 0 0 -1px #e0e0e8; }
.canvas { width: 1094px; height: 793px; background: #edf4fc; }
.side { width: 506px; margin-left: 6px; height: 820px; background: #edf4fc; }
.side > .head { background: #eeeef2; }

.grid-line { stroke: #a3a3ff; }
.guide { stroke: #f00; stroke-dasharray: 3 3; }
.outline { fill: rgba(0, 0, 0, .106); stroke: #111; stroke-width: 1.2; }
.bearing { fill: #f88; }
.tick { stroke: #b5b5b5; }
.edge { stroke: #000; stroke-dasharray: 4 1.455; fill: none; }
.edge.down { stroke-dasharray: 9.5 1.41; }
.rl { font-size: 9.5px; text-anchor: middle; }
.gl { font-size: 9.8px; fill: #666; }
.sb-arrows, .vscroll { fill: #97a9c8; }

/* masters */
.tools.masters { gap: 0; padding-left: 4px; }
.masters svg + svg { margin-left: 7px; }
.masters .arr { margin-left: 2px; }
.masters .m8 { margin-left: 8px; }
.masters .arr.gap { margin-left: 8px; }
.masters .m9 { margin-left: 7px; }
.layers { height: 112px; display: flex; overflow: hidden; }
.layers ul { width: 479px; margin: -3px 0 0; padding: 0; list-style: none; background: #fff; }
.layers li { height: 23px; display: flex; align-items: center; }
.layers span { width: 421px; height: 23px; line-height: 22px; margin-left: 19px; padding-left: 2px; border-left: 1px solid #edf4fc; }
.layers em { width: 20px; height: 23px; border: solid #edf4fc; border-width: 0 1px; margin-right: 5px; }
.layers .dot { display: block; width: 10px; height: 10px; margin-top: 1px; border: 1px solid #222; border-radius: 50%; }
.layers .sel { background: #bbddfa; }
.vscroll { width: 27px; height: 112px; }
.band { height: 6px; background: #ccccdc; }

/* variations */
.side > .head.blue, .band + .head { height: 21px; padding-top: 0; }
.side > .head.blue { background: #007acc; color: #fff; }
.blue .dots { filter: brightness(1.5); opacity: .6; }
.head.blue .pin, .head.blue .x { stroke: #fff; }
.variations { height: 158px; padding: 3px 0 0 8px; }
.variations label { display: block; height: 20px; line-height: 18px; padding-left: 8px; }
.axis { height: 23px; margin-bottom: 9px; display: flex; }
.slider { width: 389px; height: 24px; padding: 11px 9px; }
.slider.focus { outline: 1px dotted #000; outline-offset: -1px; }
.track { position: relative; height: 4px; border-radius: 2px; background: #cddeef; }
.track i { position: absolute; top: -7px; margin-left: -8px; width: 16px; height: 16px; border-radius: 50%; border: 1px solid #92a2c4; background: radial-gradient(circle, #4d6fee 3.7px, #fff 4.3px); }
.spin { width: 85px; height: 23px; margin-left: 8px; background: #fff; border: 1px solid #cddff2; display: flex; align-items: center; justify-content: flex-end; padding: 0 6px 1px 0; letter-spacing: -0.4px; }
.spin svg { width: 8px; height: 14px; margin-left: 6px; fill: none; stroke: #000; stroke-width: 1.3; }

/* glyph properties */
.props { height: 370px; background: #f5f5f5; padding: 8px 4px 0 8px; }
.row { height: 28px; display: flex; }
.row label { width: 76px; line-height: 19px; white-space: nowrap; }
.row label:has(+ .num) { width: 35px; }
.row label.num { width: 41px; }
.field { flex: 1; height: 23px; line-height: 20px; background: #fff; border: 1px solid #bcd4ec; padding-left: 2px; border-radius: 1px; }
.select { display: flex; align-items: center; justify-content: space-between; padding: 0 9px 1px 4px; }
.select.auto { flex: none; width: 90px; }
.select.second { margin-left: 4px; }
.unassigned { margin-left: 62px; line-height: 19px; }
.wand { width: 17px; height: 17px; margin: 1px 2px 0 9px; }
.uni { width: 16px; height: 16px; margin: 1px 2px 0 9px; }
.note { height: 131px; }
.memo { flex: 1; border: 1px solid #bcd4ec; padding: 1px; background: #fff; display: grid; grid-template-columns: 388px 26px; grid-template-rows: 101px 26px; }
.memo svg { background: #edf4fc; fill: #c0cfe2; width: 100%; height: 100%; }
.corner { background: #edf4fc; }

/* status bar and the strip of taskbar under the window */
.status { height: 25px; display: flex; align-items: center; padding-bottom: 1px; }
.status .pos { width: 645px; padding-left: 6px; letter-spacing: -0.5px; }
.status .info { flex: 1; border-left: 1px solid #a3bcd6; padding-left: 6px; display: flex; gap: 10px; letter-spacing: -0.25px; }
.status .mode { width: 141px; border-left: 1px solid #a3bcd6; text-align: right; padding-right: 8px; }
.taskbar { grid-column: 1 / 3; height: 8px; overflow: hidden; display: flex; background: linear-gradient(90deg, #16302f 0, #1f3d3c 336px, #23403c 480px, #474848 720px, #45463e 920px, #33352a 1150px, #2a2a1c 1340px, #203430 1420px, #25423f 1500px, #203336 1700px, #1d3235 1928px); }
.search { width: 288px; height: 8px; margin-left: 48px; background: #f3f3f3; padding-left: 232px; }
.search svg { width: 32px; height: 8px; }
.taskbar span { margin-left: auto; margin-right: 19px; margin-top: 2px; color: #fff; line-height: 16px; }
```
FILE: script.js
```javascript
const NS = 'http://www.w3.org/2000/svg';
const SCALE = 0.5455; // 54.55% zoom
const ORIGIN_X = 721;
const ORIGIN_Y = 822;
const STEP = 69.83;

const grid = document.getElementById('grid');
const guides = document.getElementById('guides');
const ruler = document.getElementById('ruler');

function line(parent, cls, x1, y1, x2, y2) {
    const el = document.createElementNS(NS, 'path');
    el.setAttribute('class', cls);
    el.setAttribute('d', `M${x1} ${y1}L${x2} ${y2}`);
    parent.appendChild(el);
}

function label(parent, cls, x, y, str) {
    const el = document.createElementNS(NS, 'text');
    el.setAttribute('class', cls);
    el.setAttribute('x', x);
    el.setAttribute('y', y);
    el.textContent = str;
    parent.appendChild(el);
}

// grid every 128 units
for (let k = -5; k <= 9; k++) {
    const x = Math.round(ORIGIN_X + k * STEP) + 0.5;
    line(grid, 'grid-line', x, 234, x, 993);
}
for (let k = -2; k <= 8; k++) {
    const y = Math.round(ORIGIN_Y - k * STEP) + 0.5;
    line(grid, 'grid-line', 326, y, 1386, y);
}

// metric guides
[['WinAscent 1024', 263.5], ['CapHeight & x-Height 896', 333.5], ['Baseline 0', 822.5], ['WinDescent -256', 962.5]].forEach(([name, y]) => {
    line(guides, 'guide', 326, y, 1386, y);
    label(guides, 'gl', 330, y - 3.5, name);
});
line(guides, 'guide', 721.5, 234, 721.5, 993);
line(guides, 'guide', 1041.5, 234, 1041.5, 993);

// horizontal ruler
for (let u = -720; u <= 1240; u += 10) {
    const x = Math.round(722 + u * SCALE) + 0.5;
    const len = u % 100 === 0 ? 5 : u % 50 === 0 ? 4 : 2;
    line(ruler, 'tick', x, 233 - len, x, 233);
    if (u % 100 === 0 && u >= -600 && u <= 1100) {
        label(ruler, 'rl', x, 226, u);
    }
}
label(ruler, 'rl', 1382, 226, 'units');

// vertical ruler, digits are stacked
for (let u = -340; u <= 1060; u += 20) {
    const y = Math.round(822 - u * SCALE) + 0.5;
    const len = u % 100 === 0 ? 4 : 2;
    line(ruler, 'tick', 325 - len, y, 325, y);
    if (u % 200 === 0 && u <= 1000) {
        const chars = String(u).split('');
        chars.forEach((c, i) => label(ruler, 'rl', 314.5, y + 8.7 - 4.5 * chars.length + i * 9.5, c));
    }
}
```
